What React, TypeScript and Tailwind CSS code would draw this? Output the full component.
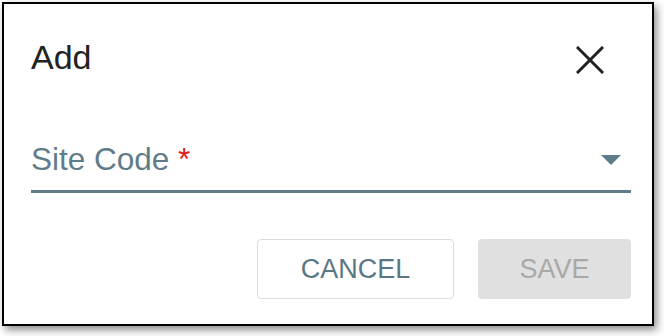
import { useState } from 'react';

function CloseIcon() {
  return (
    <svg width="28" height="28" viewBox="0 0 28 28" aria-hidden="true">
      <path
        d="M2 2 L26 26 M26 2 L2 26"
        stroke="#222"
        strokeWidth="3"
        strokeLinecap="square"
        fill="none"
      />
    </svg>
  );
}

function Caret() {
  return (
    <svg width="20" height="10" viewBox="0 0 20 10" aria-hidden="true">
      <path d="M0 0 L20 0 L10 10 Z" fill="#5f7c8a" />
    </svg>
  );
}

export default function App() {
  const [siteCode] = useState('');

  return (
    <div className="w-[664px] h-[336px] bg-white pl-[2px] pt-[2px] font-['Liberation_Sans',Arial,sans-serif]">
      <div className="w-[652px] h-[324px] border-2 border-black bg-white shadow-[3px_4px_8px_rgba(0,0,0,0.45)] pl-[27px] pr-[21px] pt-[36px] flex flex-col">
        {/* header */}
        <div className="flex items-center justify-between h-[34px]">
          <h1 className="text-[34px] leading-[34px] text-[#222]">Add</h1>
          <button className="mr-[27px] mt-[5px]">
            <CloseIcon />
          </button>
        </div>

        {/* select field */}
        <div className="mt-[70px] border-b-[3px] border-[#5f7c8a] pb-[15px] flex items-center justify-between">
          <span className="text-[31.5px] leading-[31px] text-[#5f7c8a]">
            {siteCode || 'Site Code'} <span className="text-[#e0201c]">*</span>
          </span>
          <span className="mr-[10px]">
            <Caret />
          </span>
        </div>

        {/* actions */}
        <div className="mt-[46px] flex justify-end gap-[24px]">
          <button className="w-[197px] h-[60px] rounded-[4px] border border-[#dcdcdc] text-[27px] text-[#5a7785]">
            CANCEL
          </button>
          <button
            disabled
            className="w-[153px] h-[60px] rounded-[4px] bg-[#e0e0e0] text-[27px] text-[#a8a8a8]"
          >
            SAVE
          </button>
        </div>
      </div>
    </div>
  );
}
